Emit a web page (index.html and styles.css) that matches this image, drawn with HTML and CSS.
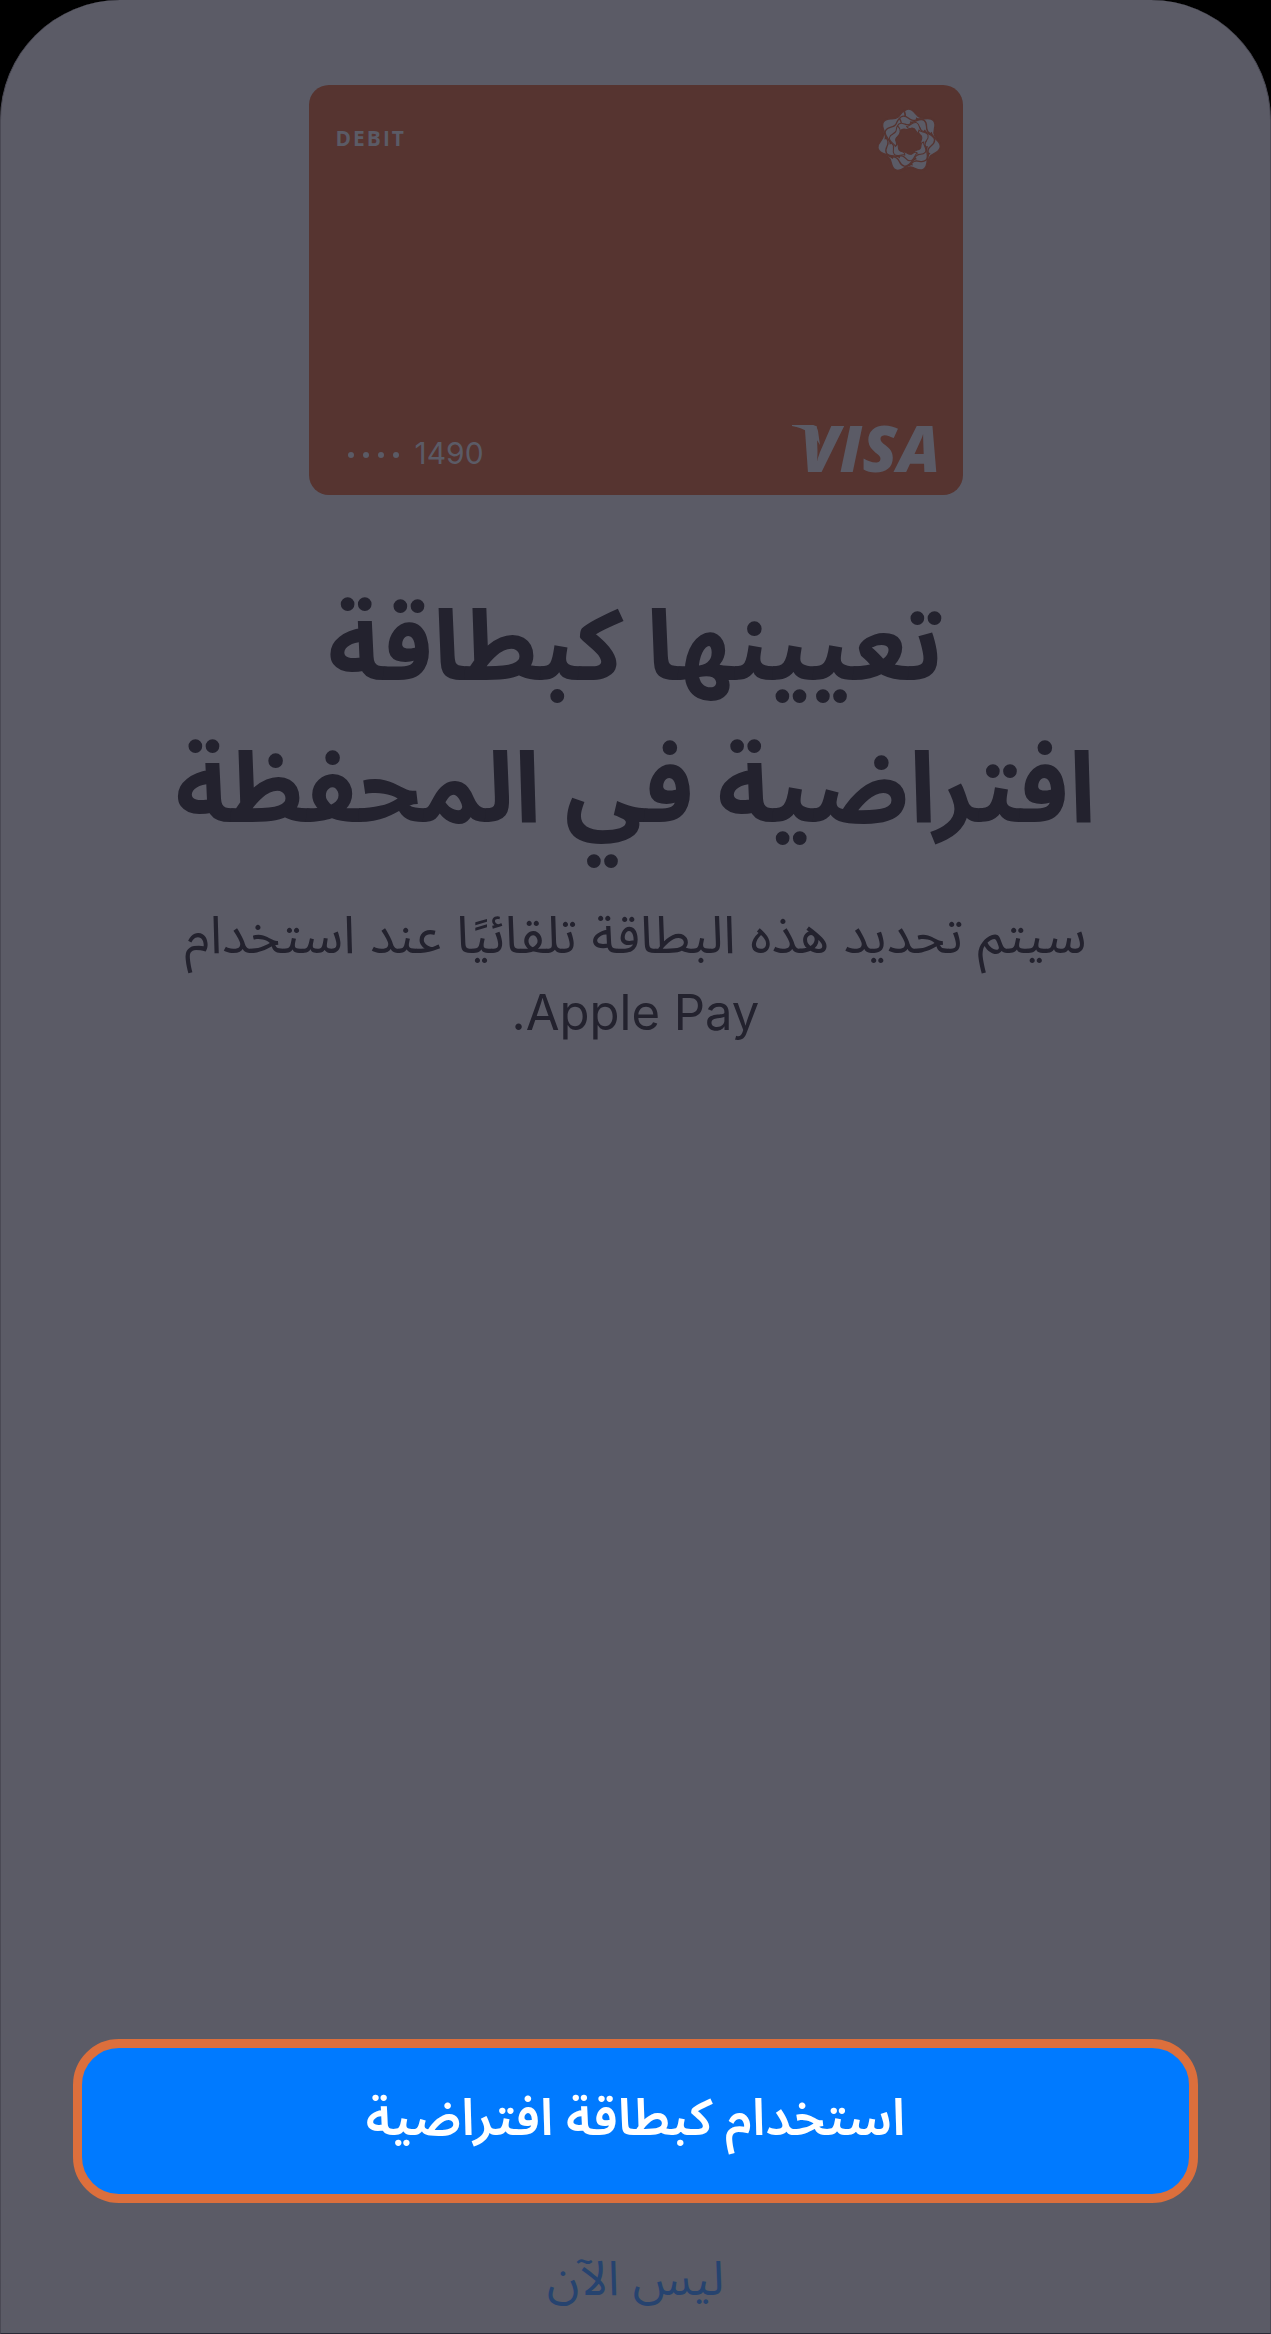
FILE: index.html
```
<!DOCTYPE html>
<html lang="ar" dir="rtl">
<head>
    <meta charset="UTF-8">
    <meta name="viewport" content="width=device-width, initial-scale=1">
    <title>Apple Pay</title>
    <link rel="stylesheet" href="styles.css">
</head>
<body>
    <main class="sheet">
        <div class="card" dir="ltr">
            <div class="card-row">
                <span class="card-type">DEBIT</span>
                <svg class="card-logo" viewBox="-96 -96 192 192" aria-hidden="true">
                    <defs>
                        <path id="petal" d="M-38 -60C-24 -66 -22 -96 -2 -96C19 -96 18 -74 35 -71C45 -69 51 -73 62 -68C48 -44 24 -48 12 -58C2 -66 -6 -68 -16 -60C-24 -54 -32 -54 -38 -60Z"/>
                        <g id="petals">
                            <use href="#petal"/>
                            <use href="#petal" transform="rotate(51.43)"/>
                            <use href="#petal" transform="rotate(102.86)"/>
                            <use href="#petal" transform="rotate(154.29)"/>
                            <use href="#petal" transform="rotate(205.71)"/>
                            <use href="#petal" transform="rotate(257.14)"/>
                            <use href="#petal" transform="rotate(308.57)"/>
                        </g>
                    </defs>
                    <use href="#petals"/>
                    <use href="#petals" transform="rotate(-14) scale(0.8)"/>
                    <use href="#petals" transform="rotate(-28) scale(0.62)"/>
                </svg>
            </div>
            <div class="card-row card-bottom">
                <div class="card-number">
                    <span class="dots"><i></i><i></i><i></i><i></i></span>
                    <span>1490</span>
                </div>
                <div class="visa">
                    <svg class="visa-wing" viewBox="0 0 28 20" aria-hidden="true">
                        <path d="M0 0H20C24 0 25 2 26 6L28 20C22 9 12 3 0 1Z"/>
                    </svg>
                    <span>VISA</span>
                </div>
            </div>
        </div>

        <h1 class="title">تعيينها كبطاقة<br>افتراضية في المحفظة</h1>
        <p class="subtitle">سيتم تحديد هذه البطاقة تلقائيًا عند استخدام<br><span class="latin">Apple Pay.</span></p>

        <div class="actions">
            <button type="button" class="primary">استخدام كبطاقة افتراضية</button>
            <button type="button" class="secondary">ليس الآن</button>
        </div>
    </main>
</body>
</html>
```
FILE: styles.css
```
* {
    box-sizing: border-box;
}

body {
    margin: 0;
    background-color: #000;
    font-family: Inter, "Noto Sans Arabic", "DejaVu Sans", sans-serif;
    color: #23222e;
}

.sheet {
    display: flex;
    flex-direction: column;
    align-items: center;
    min-height: 100vh;
    padding: 85px 72px 0;
    background-color: #5b5b66;
    border: 1px solid #4a4954;
    border-top: none;
    border-bottom-color: #2b2a36;
    border-radius: 120px 120px 0 0;
}

.card {
    display: flex;
    flex-direction: column;
    justify-content: space-between;
    width: 100%;
    max-width: 654px;
    height: 410px;
    padding: 24px 22px 20px 27px;
    background-color: #563430;
    border-radius: 20px;
    color: #5b5b66;
}

.card-row {
    display: flex;
    justify-content: space-between;
    align-items: center;
}

.card-bottom {
    align-items: flex-end;
}

.card-type {
    padding-bottom: 6px;
    font-family: "Open Sans", sans-serif;
    font-size: 21px;
    font-weight: 700;
    letter-spacing: 2px;
}

.card-logo {
    width: 64px;
    height: 64px;
    fill: #5b5b66;
    stroke: #563430;
    stroke-width: 5px;
}

.card-number {
    display: flex;
    align-items: center;
    gap: 16px;
    padding: 0 0 4px 12px;
    font-size: 30px;
}

.dots {
    display: flex;
    gap: 9px;
    padding-top: 4px;
}

.dots i {
    width: 6px;
    height: 6px;
    border-radius: 50%;
    background-color: #5b5b66;
}

.visa {
    display: flex;
    align-items: flex-start;
    padding-bottom: 4px;
    font-family: "Open Sans", sans-serif;
    font-size: 64px;
    font-style: italic;
    font-weight: 800;
    line-height: 46px;
}

.visa-wing {
    width: 28px;
    height: 20px;
    margin-right: -20px;
    fill: #5b5b66;
}

.title {
    margin: 78px 0 0;
    font-size: 99px;
    font-weight: 700;
    line-height: 142px;
    text-align: center;
}

.subtitle {
    margin: 39px 0 0;
    font-size: 52px;
    line-height: 77px;
    text-align: center;
}

.latin {
    font-size: 49px;
}

.actions {
    display: flex;
    flex-direction: column;
    align-items: center;
    gap: 26px;
    width: 100%;
    margin-top: auto;
    padding-bottom: 6px;
}

button {
    font-family: inherit;
    cursor: pointer;
}

.primary {
    width: 100%;
    height: 164px;
    padding-bottom: 6px;
    background-color: #007aff;
    border: 9px solid #dc6f3c;
    border-radius: 46px;
    color: #fff;
    font-size: 51px;
    font-weight: 600;
}

.secondary {
    height: 98px;
    padding: 0 24px;
    background: none;
    border: none;
    color: #26436f;
    font-size: 48px;
}
```
